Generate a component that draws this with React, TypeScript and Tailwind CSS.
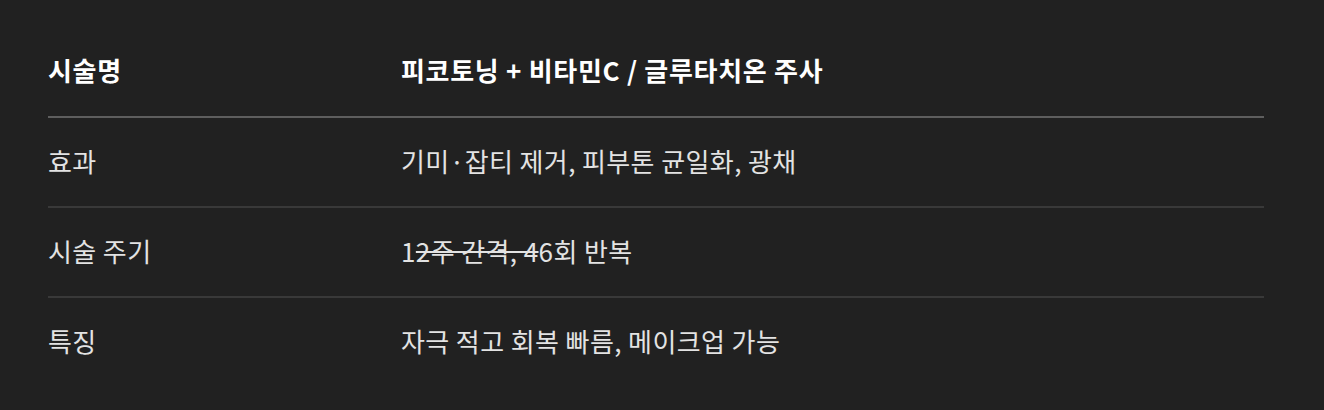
const rows: { label: string; value: React.ReactNode }[] = [
  { label: '효과', value: '기미·잡티 제거, 피부톤 균일화, 광채' },
  {
    label: '시술 주기',
    value: (
      <>
        1<del>2주 간격, 4</del>6회 반복
      </>
    ),
  },
  { label: '특징', value: '자극 적고 회복 빠름, 메이크업 가능' },
]

export default function App() {
  return (
    <div
      className="min-h-[410px] w-full bg-[#212121] pl-12 pr-[60px] pt-[26px] text-[26px] tracking-[0.4px] text-[#e3e3e3]"
      style={{ fontFamily: '"Noto Sans CJK KR", "Noto Sans", sans-serif' }}
    >
      <div className="flex h-[92px] items-center border-b-2 border-[#5e5e5e] pb-[3px] font-semibold tracking-[0.7px] text-white">
        <div className="w-[353px] shrink-0">시술명</div>
        <div>피코토닝 + 비타민C / 글루타치온 주사</div>
      </div>
      {rows.map((r, i) => (
        <div
          key={r.label}
          className={`flex h-[90px] items-center border-b-2 pb-[3px] ${i < rows.length - 1 ? 'border-[#393939]' : 'border-transparent'}`}
        >
          <div className="w-[353px] shrink-0">{r.label}</div>
          <div>{r.value}</div>
        </div>
      ))}
    </div>
  )
}
